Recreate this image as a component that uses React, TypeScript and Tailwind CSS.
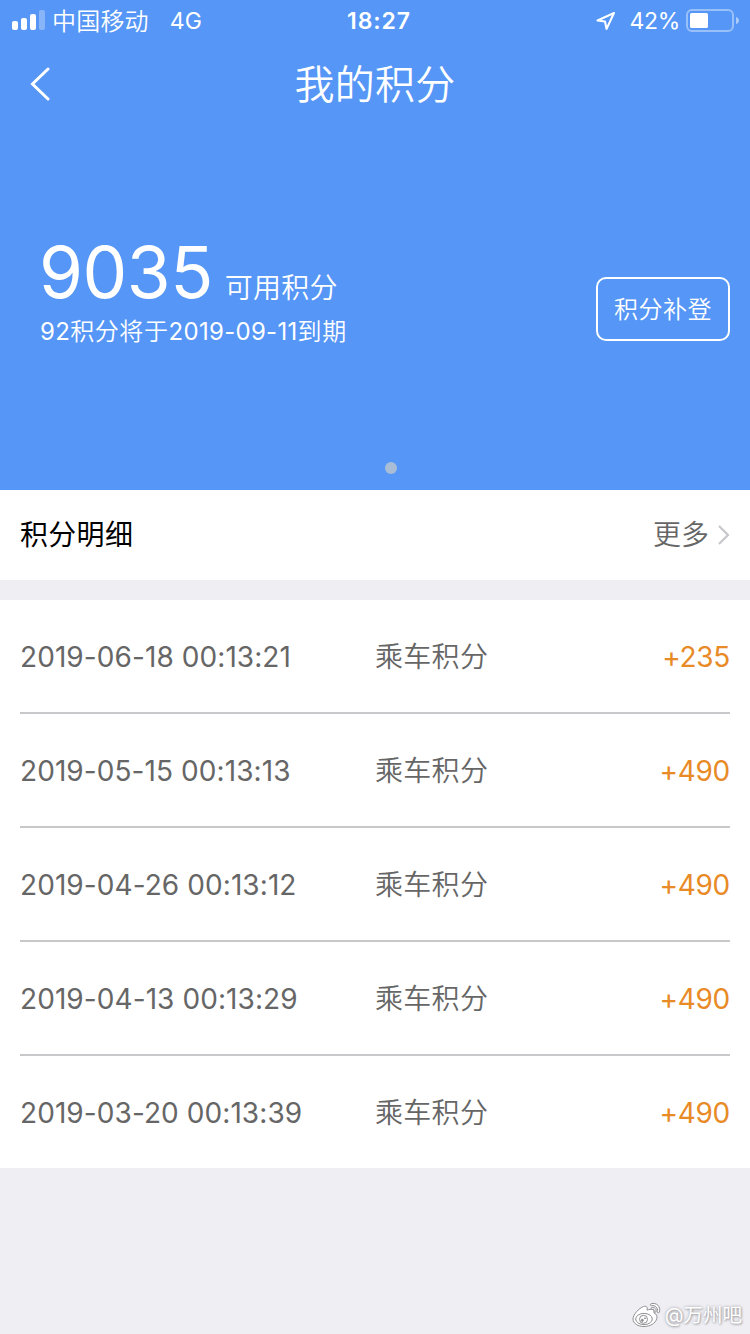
interface PointRecord {
  id: number;
  time: string;
  type: string;
  amount: string;
}

const RECORDS: PointRecord[] = [
  { id: 1, time: '2019-06-18 00:13:21', type: '乘车积分', amount: '+235' },
  { id: 2, time: '2019-05-15 00:13:13', type: '乘车积分', amount: '+490' },
  { id: 3, time: '2019-04-26 00:13:12', type: '乘车积分', amount: '+490' },
  { id: 4, time: '2019-04-13 00:13:29', type: '乘车积分', amount: '+490' },
  { id: 5, time: '2019-03-20 00:13:39', type: '乘车积分', amount: '+490' },
];

function StatusBar() {
  return (
    <div className="grid h-10 grid-cols-3 items-center pl-3 text-[24px] leading-10">
      <div className="flex items-center">
        <svg width={33} height={20} viewBox="0 0 33 20" fill="#fff">
          <rect x="0" y="11" width="6" height="9" rx="2" />
          <rect x="9" y="8" width="6" height="12" rx="2" />
          <rect x="18" y="4" width="6" height="16" rx="2" />
          <rect x="27" y="0" width="6" height="20" rx="2" opacity="0.3" />
        </svg>
        <span className="ml-[7px] pt-[3px] leading-[37px] tracking-[0.2px]">中国移动</span>
        <span className="ml-[21px] pt-0.5 text-[23px] leading-[38px] font-normal">4G</span>
      </div>
      <div className="pt-0.5 pr-1 text-center text-[23px] leading-[38px] font-semibold tracking-[0.9px]">18:27</div>
      <div className="flex items-center justify-end pr-[11px]">
        <svg className="mt-0.5" width={20} height={20} viewBox="0 0 20 20" fill="none" stroke="#fff" strokeWidth={2} strokeLinejoin="round">
          <path d="M18 2 L1.5 9.5 L9 10.5 L10.5 18 Z" />
        </svg>
        <span className="ml-[13px] pt-0.5 text-[23px] leading-[38px] font-normal tracking-[-0.3px]">42%</span>
        <svg className="ml-[6px] -mr-[11px] shrink-0" width={64} height={24} viewBox="0 0 64 24">
          <rect x="1" y="2" width="46" height="21" rx="5" fill="none" stroke="#fff" strokeOpacity="0.4" strokeWidth="2" />
          <rect x="4" y="5" width="18" height="15" rx="1.5" fill="#fff" />
          <path d="M50 9 Q53 10 53 12.5 Q53 15 50 16 Z" fill="#fff" fillOpacity="0.5" />
        </svg>
      </div>
    </div>
  );
}

function WeiboIcon() {
  return (
    <svg width={30} height={26} viewBox="0 0 30 26" fill="#fff" stroke="#8f8f94" strokeWidth={1}>
      <path d="M11.5 4.5 C14 3.5 16 5 15 8.2 C19 6.6 23 7 22 11 C24.5 12 25.5 14 24.8 16.5 C23.5 21.5 18 24.5 12 24.5 C6 24.5 1 21.5 1 17 C1 12.5 7 6.2 11.5 4.5 Z" />
      <ellipse cx="12" cy="17" rx="8.3" ry="5.6" />
      <circle cx="11.5" cy="17.3" r="4" />
      <circle cx="10.3" cy="18.3" r="1.1" fill="#8f8f94" />
      <circle cx="13" cy="16.3" r="0.5" fill="#8f8f94" />
      <path d="M19 1.8 C24.5 0 29.2 4.8 27.4 10.2 C26.9 11.4 25 11 25.3 9.6 C26.3 5.8 23.2 3 19.6 3.7 C18.2 3.8 18 2.2 19 1.8 Z" />
      <path d="M19.8 5.6 C22.6 5 25 7.3 23.8 10 C23.3 10.9 22 10.4 22.2 9.4 C22.7 7.9 21.7 7 20.2 7.3 C19.1 7.3 18.9 6 19.8 5.6 Z" />
    </svg>
  );
}

export default function App() {
  return (
    <div className="flex h-[1334px] w-[750px] flex-col overflow-hidden bg-[#eeeef3] font-['Inter','Noto_Sans_CJK_SC',sans-serif] font-[350]" lang="zh-CN">
      {/* Header with the points balance */}
      <header className="flex h-[490px] flex-col bg-[#5596f6] text-white">
        <StatusBar />
        <div className="grid h-22 grid-cols-[80px_1fr_80px] items-center">
          <svg className="ml-[30px]" width={22} height={34} viewBox="0 0 22 34" fill="none" stroke="#fff" strokeWidth={3} strokeLinecap="round">
            <path d="M18 2 L2.5 17 L18 32" />
          </svg>
          <h1 className="pt-0.5 text-center text-[40px] leading-[86px] font-[350] tracking-[0.2px]">我的积分</h1>
        </div>

        <div className="mt-[106px] flex items-start justify-between pr-5 pl-10">
          <div>
            <div className="flex h-[80px] items-baseline leading-[76px]">
              <span className="-ml-px text-[71px] font-normal tracking-[-0.5px]">9035</span>
              <span className="ml-[12px] text-[28px] tracking-[0.2px]">可用积分</span>
            </div>
            <p className="text-[24px] leading-9 tracking-[0.6px]">
              <span className="font-normal tracking-[0.3px]">92</span>积分将于
              <span className="font-normal tracking-[0.3px]">2019-09-11</span>到期
            </p>
          </div>
          <button className="mt-[43px] h-16 w-[134px] rounded-[10px] border-2 border-white pt-0.5 text-[24px] tracking-[0.5px]">
            积分补登
          </button>
        </div>
        <div className="mt-auto mb-4 ml-[385px] h-3 w-3 rounded-full bg-[#a9bdd6]" />
      </header>

      <div className="flex h-[90px] items-center justify-between bg-white px-5 text-[28px]">
        <h2 className="font-normal tracking-[0.3px] text-black">积分明细</h2>
        <div className="flex items-center text-[#666]">
          <span>更多</span>
          <svg className="ml-2" width={13} height={20} viewBox="0 0 13 20" fill="none" stroke="#c7c7cc" strokeWidth={2.2}>
            <path d="M2 1 L11 10 L2 19" />
          </svg>
        </div>
      </div>

      {/* Points history */}
      <ul className="mt-5 bg-white px-5 text-[28px] text-[#666]">
        {RECORDS.map((r) => (
          <li
            key={r.id}
            className="grid h-[114px] grid-cols-[355px_1fr_auto] items-center border-b-2 border-[#c8c8cb] pt-0.5 last:h-[112px] last:border-b-0"
          >
            <span className="font-normal tracking-[0.08px]">{r.time}</span>
            <span className="tracking-[0.3px]">{r.type}</span>
            <span className="font-normal tracking-[-0.3px] text-[#e88a26]">{r.amount}</span>
          </li>
        ))}
      </ul>

      <div className="mt-auto mr-[8px] mb-[5px] flex items-center justify-end gap-[3px]">
        <WeiboIcon />
        <span className="text-[19.5px] leading-7 font-normal text-white [text-shadow:0_0_3px_#99999e,1px_1px_2px_#b0b0b5]">@万州吧</span>
      </div>
    </div>
  );
}
